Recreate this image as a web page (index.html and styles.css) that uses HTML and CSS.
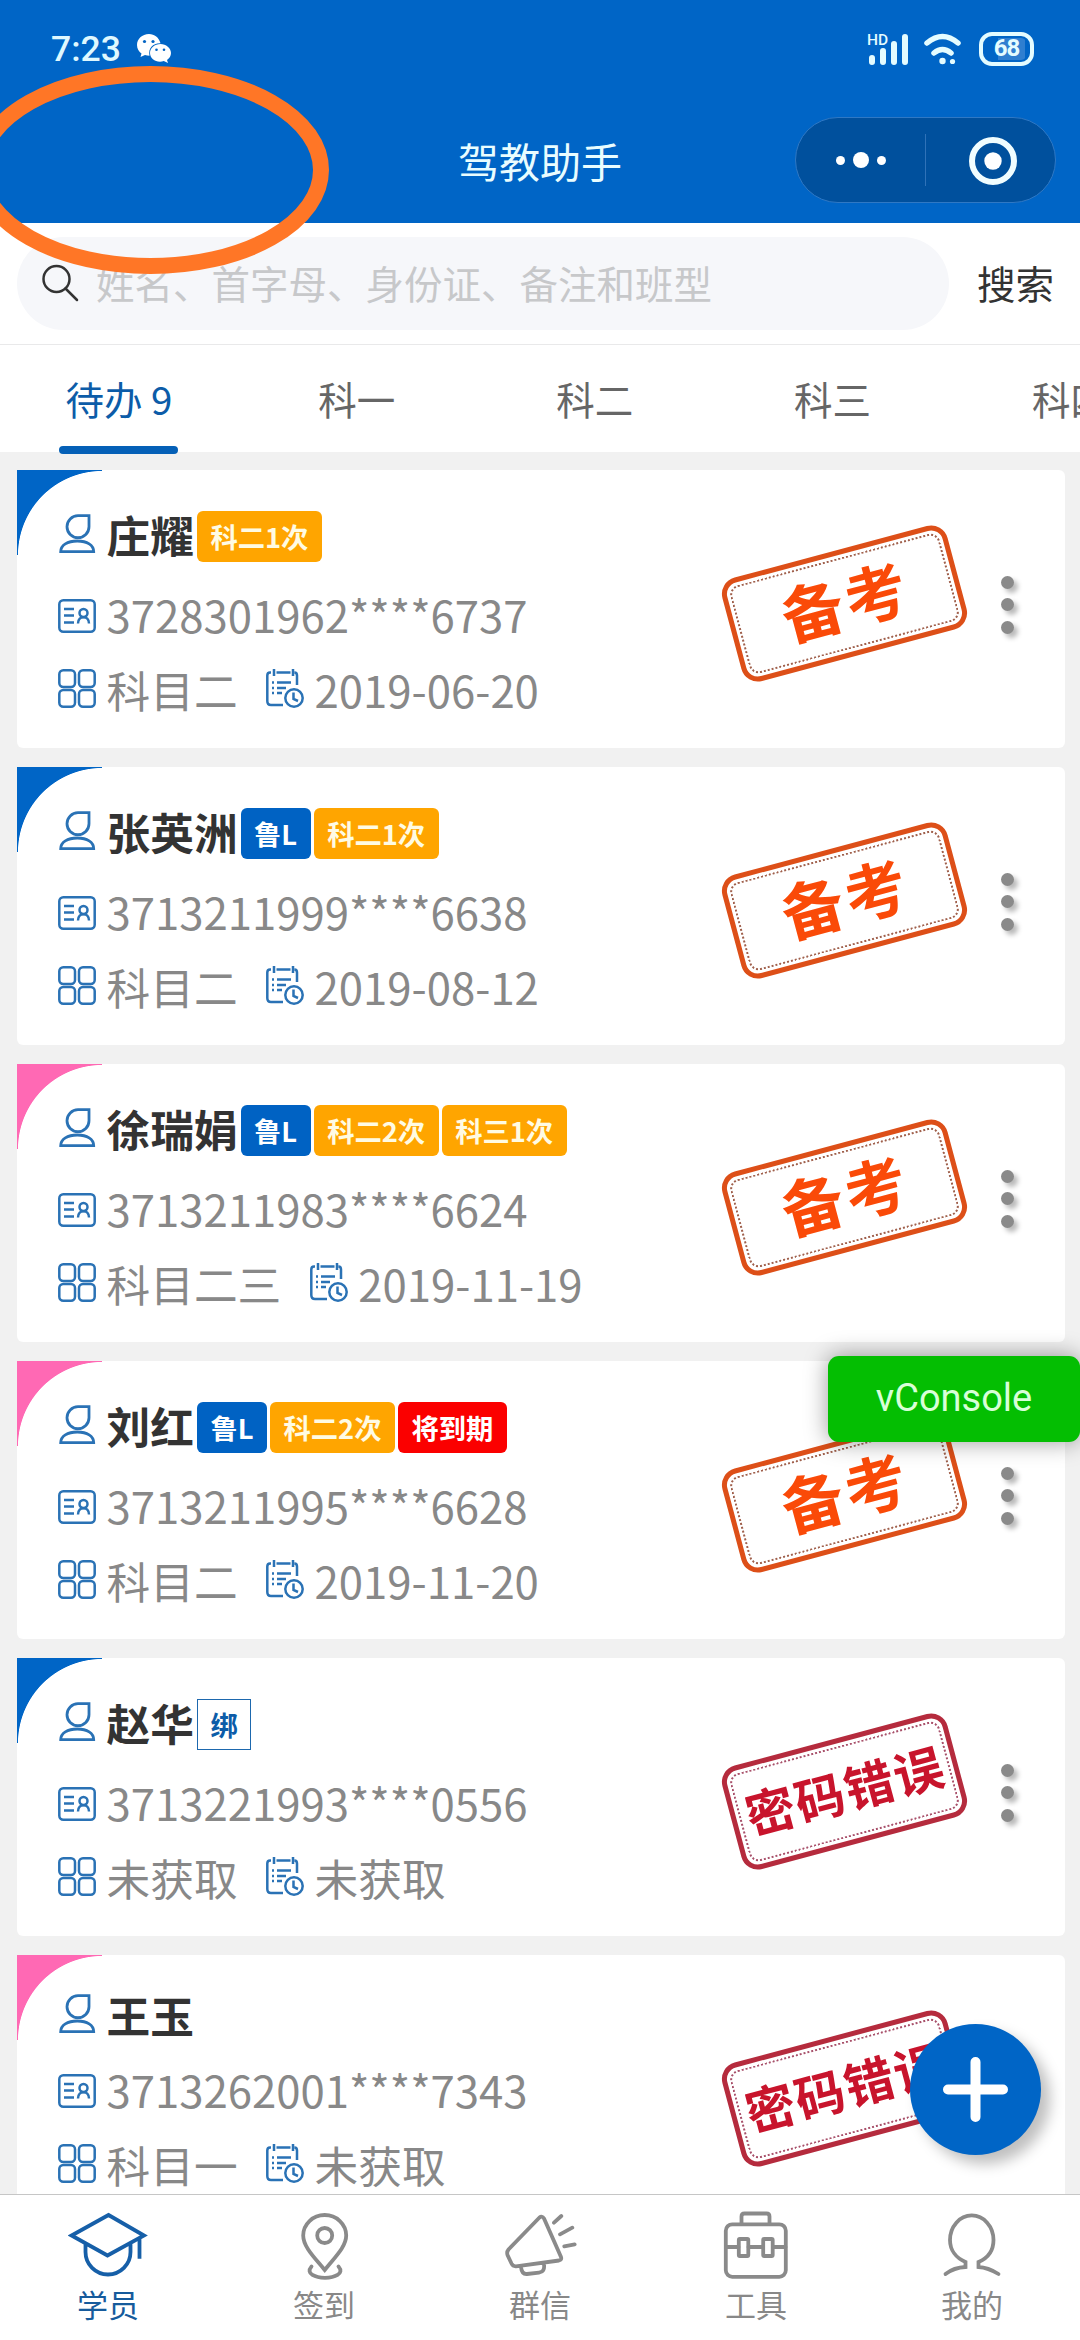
FILE: index.html
```html
<!DOCTYPE html>
<html lang="zh-CN">
<head>
<meta charset="utf-8">
<title>驾教助手</title>
<link rel="stylesheet" href="styles.css">
</head>
<body>
<svg class="sprite" aria-hidden="true">
  <symbol id="user" viewBox="0 0 38 40">
    <path d="M31 1.7H20A11 11 0 1 0 31 12.7Z"/>
    <path d="M2.7 37.7C2.7 31 9.500 27 19.300 27S35.700 31 35.700 37.700Z"/>
  </symbol>
  <symbol id="idcard" viewBox="0 0 38 34">
    <rect x="1.300" y="1.300" width="35.400" height="31.400" rx="4"/>
    <path d="M6 10h10M6 16.500h10M6 23.500h10"/>
    <circle cx="25.500" cy="14" r="4"/>
    <path d="M20 24.500C20 16 31 16 31 24.500"/>
  </symbol>
  <symbol id="grid" viewBox="0 0 38 39">
    <rect x="1.300" y="1.300" width="15.700" height="16.700" rx="4"/>
    <rect x="21" y="1.300" width="15.700" height="16.700" rx="4"/>
    <rect x="1.300" y="21" width="15.700" height="16.700" rx="4"/>
    <rect x="21" y="21" width="15.700" height="16.700" rx="4"/>
  </symbol>
  <symbol id="calendar" viewBox="0 0 38 39">
    <path d="M5 3.500H4Q1.300 3.500 1.300 6.500V32Q1.300 36 5 36H17M10.500 3.500H24.500M28.500 3.500Q31 3.500 31 6.500V16M8 0V7M27 0V7"/>
    <path d="M11 13.500H25M11 19H20M11 24H16M6 13.500h2M6 19h2M6 24h2"/>
    <circle cx="28" cy="29" r="8.700"/>
    <path d="M27.500 23.500V30L32 32"/>
  </symbol>
</svg>

<div class="app">
  <header class="header">
    <div class="status">
      <span class="time">7:23</span>
      <svg class="wechat" viewBox="0 0 34 29">
        <path fill="#fff" d="M12 0C5 0 0 5 0 11c0 4 2 6.500 4.500 8.500L3.500 23l4.500-2c1.500.5 3 .7 4.500.7C11 14 16 9 23.500 9.300 22 3.500 17.500 0 12 0Z"/>
        <path fill="#fff" d="M23.500 10C17.500 10 13 14 13 19s4.500 8.700 10 8.700c1.300 0 2.500-.2 3.800-.6L31 29l-1-3c2.500-1.700 4-4 4-7 0-5-5-9-10.500-9Z"/>
        <g fill="#0364c4"><circle cx="7.500" cy="7.500" r="1.600"/><circle cx="16" cy="7.500" r="1.600"/><circle cx="19.500" cy="15.700" r="1.300"/><circle cx="27" cy="15.700" r="1.300"/></g>
      </svg>
      <div class="signals">
        <svg class="signal" viewBox="0 0 42 34">
          <text x="0" y="12.500" class="hd">HD</text>
          <path d="M5 26V30M16 19V30M27 12V30M38 5V30" fill="none" stroke="#e4fcff" stroke-width="6" stroke-linecap="round"/>
        </svg>
        <svg class="wifi" viewBox="0 0 37 32">
          <path d="M3 10Q18.500-3 34 10M10 20Q18.500 13 27 20" fill="none" stroke="#e4fcff" stroke-width="5.500" stroke-linecap="round"/>
          <circle cx="18.500" cy="28" r="3.200" fill="#e4fcff"/><circle cx="28.500" cy="28.500" r="2.600" fill="#e4fcff"/>
        </svg>
        <div class="battery">68</div>
      </div>
    </div>
    <div class="titlebar">
      <h1 class="title">驾教助手</h1>
      <div class="capsule">
        <div class="capsule-half more"><i></i><i></i><i></i></div>
        <div class="capsule-half close">
          <svg viewBox="0 0 48 48"><circle cx="24" cy="24" r="21" fill="none" stroke="#f0fdff" stroke-width="6"/><circle cx="24" cy="24" r="8.700" fill="#fff"/></svg>
        </div>
      </div>
    </div>
  </header>

  <div class="search">
    <div class="search-box">
      <svg class="search-icon" viewBox="0 0 38 38"><circle cx="15.500" cy="15" r="13"/><path d="M24.500 24.500L36 36"/></svg>
      <span class="placeholder">姓名、首字母、身份证、备注和班型</span>
    </div>
    <span class="search-button">搜索</span>
  </div>

  <nav class="tabs">
    <span class="tab active">待办 9</span>
    <span class="tab">科一</span>
    <span class="tab">科二</span>
    <span class="tab">科三</span>
    <span class="tab">科四</span>
  </nav>

  <main class="list">
    <article class="card male">
      <div class="info">
        <div class="row name-row tagged"><svg class="icon user"><use href="#user"/></svg><b class="name">庄耀</b><span class="tag orange">科二1次</span></div>
        <div class="row"><svg class="icon idcard"><use href="#idcard"/></svg><span>3728301962****6737</span></div>
        <div class="row"><svg class="icon"><use href="#grid"/></svg><span>科目二</span><svg class="icon calendar"><use href="#calendar"/></svg><span>2019-06-20</span></div>
      </div>
      <div class="stamp ready"><span>备考</span></div>
      <div class="menu"><i></i><i></i><i></i></div>
    </article>

    <article class="card male">
      <div class="info">
        <div class="row name-row tagged"><svg class="icon user"><use href="#user"/></svg><b class="name">张英洲</b><span class="tag blue">鲁L</span><span class="tag orange">科二1次</span></div>
        <div class="row"><svg class="icon idcard"><use href="#idcard"/></svg><span>3713211999****6638</span></div>
        <div class="row"><svg class="icon"><use href="#grid"/></svg><span>科目二</span><svg class="icon calendar"><use href="#calendar"/></svg><span>2019-08-12</span></div>
      </div>
      <div class="stamp ready"><span>备考</span></div>
      <div class="menu"><i></i><i></i><i></i></div>
    </article>

    <article class="card female">
      <div class="info">
        <div class="row name-row tagged"><svg class="icon user"><use href="#user"/></svg><b class="name">徐瑞娟</b><span class="tag blue">鲁L</span><span class="tag orange">科二2次</span><span class="tag orange">科三1次</span></div>
        <div class="row"><svg class="icon idcard"><use href="#idcard"/></svg><span>3713211983****6624</span></div>
        <div class="row"><svg class="icon"><use href="#grid"/></svg><span>科目二三</span><svg class="icon calendar"><use href="#calendar"/></svg><span>2019-11-19</span></div>
      </div>
      <div class="stamp ready"><span>备考</span></div>
      <div class="menu"><i></i><i></i><i></i></div>
    </article>

    <article class="card female">
      <div class="info">
        <div class="row name-row tagged"><svg class="icon user"><use href="#user"/></svg><b class="name">刘红</b><span class="tag blue">鲁L</span><span class="tag orange">科二2次</span><span class="tag red">将到期</span></div>
        <div class="row"><svg class="icon idcard"><use href="#idcard"/></svg><span>3713211995****6628</span></div>
        <div class="row"><svg class="icon"><use href="#grid"/></svg><span>科目二</span><svg class="icon calendar"><use href="#calendar"/></svg><span>2019-11-20</span></div>
      </div>
      <div class="stamp ready"><span>备考</span></div>
      <div class="menu"><i></i><i></i><i></i></div>
    </article>

    <article class="card male">
      <div class="info">
        <div class="row name-row tagged"><svg class="icon user"><use href="#user"/></svg><b class="name">赵华</b><span class="tag outline">绑</span></div>
        <div class="row"><svg class="icon idcard"><use href="#idcard"/></svg><span>3713221993****0556</span></div>
        <div class="row"><svg class="icon"><use href="#grid"/></svg><span>未获取</span><svg class="icon calendar"><use href="#calendar"/></svg><span>未获取</span></div>
      </div>
      <div class="stamp error"><span>密码错误</span></div>
      <div class="menu"><i></i><i></i><i></i></div>
    </article>

    <article class="card female">
      <div class="info">
        <div class="row name-row"><svg class="icon user"><use href="#user"/></svg><b class="name">王玉</b></div>
        <div class="row"><svg class="icon idcard"><use href="#idcard"/></svg><span>3713262001****7343</span></div>
        <div class="row"><svg class="icon"><use href="#grid"/></svg><span>科目一</span><svg class="icon calendar"><use href="#calendar"/></svg><span>未获取</span></div>
      </div>
      <div class="stamp error"><span>密码错误</span></div>
      <div class="menu"><i></i><i></i><i></i></div>
    </article>
  </main>

  <footer class="tabbar">
    <div class="tabbar-item active">
      <svg viewBox="0 0 80 80"><path d="M40.500 10L76 30.500 39.500 50.500 3.600 30.500ZM17.500 39V47A22.500 22.500 0 0 0 62.500 47V38M71.500 33V53.700"/></svg>
      <span>学员</span>
    </div>
    <div class="tabbar-item">
      <svg viewBox="0 0 80 80"><path d="M40.700 65C31 53 19.200 42 19.200 30.500A21.500 20.500 0 0 1 62.200 30.500C62.200 42 50 53 40.700 65ZM27.500 61.500C21 69 32 72.800 41 72.800S61 69 54.500 61.500"/><circle cx="40.700" cy="30.500" r="7.500"/></svg>
      <span>签到</span>
    </div>
    <div class="tabbar-item">
      <svg viewBox="0 0 80 80"><path d="M39.500 12.500L8.500 44.500Q6.500 47 7.500 50L11.500 58.500Q13 61.500 16 61.300L59 55.500Q62 55 61 52L44 13.500Q42 10.500 39.500 12.500ZM21 62C21.500 67 23.500 69.300 27 69L39 67.700Q45 67 44 59.500M54 17.700L61.300 11M60 29.300L72.300 22.700M64.300 41.300L74.700 39.300"/></svg>
      <span>群信</span>
    </div>
    <div class="tabbar-item">
      <svg viewBox="0 0 80 80"><rect x="9.800" y="19.300" width="60" height="52.500" rx="6.500"/><path d="M25.500 19V11.500Q25.500 8.500 28.500 8.500H50.500Q53.500 8.500 53.500 11.500V19M10 42H22.500M32.500 42H47M57 42H69.500"/><rect x="22.800" y="34" width="9.500" height="17" rx="1"/><rect x="47.200" y="34" width="9.500" height="17" rx="1"/></svg>
      <span>工具</span>
    </div>
    <div class="tabbar-item">
      <svg viewBox="0 0 80 80"><path d="M13.500 69Q22 62.500 33.500 62V57C24 53 18 45 18 35A21.700 24.500 0 0 1 61.500 35C61.500 45 56 53 46.500 57V62Q56 62.500 66.500 69"/></svg>
      <span>我的</span>
    </div>
  </footer>

  <svg class="highlight" viewBox="0 0 330 210"><ellipse cx="150.500" cy="105" rx="170.500" ry="96"/></svg>
  <div class="vconsole">vConsole</div>
  <div class="add"><svg viewBox="0 0 131 131"><path d="M65.500 38V93M38 65.500H93"/></svg></div>
</div>
</body>
</html>
```

FILE: styles.css
```css
* { box-sizing: border-box; }

body {
  margin: 0;
  font-family: "Noto Sans CJK SC", sans-serif;
  color: #333;
}

.sprite { display: none; }

.app {
  position: relative;
  display: flex;
  flex-direction: column;
  width: 1080px;
  height: 2340px;
  overflow: hidden;
  background: #f1f1f1;
}

/* header */
.header {
  flex: none;
  height: 223px;
  background: #0065c6;
  color: #e9fdff;
}

.status {
  display: flex;
  align-items: center;
  height: 97px;
  padding: 0 46px 0 51px;
}

.time {
  width: 86px;
  font: 500 35.5px/40px Roboto, sans-serif;
  color: #dff8ff;
}

.wechat { width: 34px; height: 29px; }

.signals {
  display: flex;
  align-items: center;
  margin-left: auto;
}

.signal { width: 42px; height: 34px; margin-right: 15px; }
.hd { font: 500 15.5px Roboto, sans-serif; fill: #e4fcff; }
.wifi { width: 37px; height: 32px; margin-right: 18px; }

.battery {
  width: 55px;
  height: 34px;
  border: 4.5px solid #e4fcff;
  border-radius: 13px;
  background: linear-gradient(90deg, transparent 30%, #2f7fd0 30%, #2f7fd0 94%, transparent 94%) content-box;
  padding: 2px 3px;
  font: 700 24px/21px Roboto, sans-serif;
  letter-spacing: -1px;
  text-align: center;
  color: #e4fcff;
}

.titlebar {
  display: grid;
  grid-template-columns: 1fr auto 1fr;
  align-items: center;
  height: 126px;
  padding: 0 24px 0 24px;
}

.title {
  grid-column: 2;
  margin: 0;
  font-size: 41px;
  font-weight: 400;
  line-height: 60px;
}

.capsule {
  justify-self: end;
  display: flex;
  align-items: center;
  width: 261px;
  height: 86px;
  border: 1.5px solid #2f78c4;
  border-radius: 43px;
  background: #00509d;
}

.capsule-half {
  flex: 1;
  display: flex;
  align-items: center;
  justify-content: center;
  height: 52px;
}

.more { gap: 8px; border-right: 1.500px solid #2f72b8; }
.more i { width: 9px; height: 9px; border-radius: 50%; background: #fff; }
.more i:nth-child(2) { width: 16px; height: 16px; }
.close svg { width: 48px; height: 48px; margin: 2px 0 0 5px; }

/* search */
.search {
  flex: none;
  display: flex;
  align-items: center;
  height: 122px;
  padding: 0 26px 0 17px;
  border-bottom: 1.500px solid #e9e9ea;
  background: #fff;
  font-size: 38.500px;
}

.search-box {
  display: flex;
  align-items: center;
  width: 932px;
  height: 93px;
  padding-left: 25px;
  border-radius: 46.500px;
  background: #f6f7fa;
  color: #c7c8ca;
}

.placeholder, .search-button { padding-bottom: 3px; }

.search-icon {
  width: 38px;
  height: 38px;
  margin: -2px 17px 0 -1px;
  fill: none;
  stroke: #333;
  stroke-width: 2.500;
  stroke-linecap: round;
}

.search-button { margin-left: auto; }

/* category tabs */
.tabs {
  flex: none;
  display: flex;
  height: 107px;
  background: #fff;
}

.tab {
  flex: 0 0 237.9px;
  height: 109px;
  line-height: 107px;
  font-size: 38.5px;
  text-align: center;
  color: #666;
}

.tab.active { position: relative; color: #0c5ca8; }
.tab.active::after {
  content: "";
  position: absolute;
  left: 59px;
  bottom: 0;
  width: 119px;
  height: 8px;
  border-radius: 4px;
  background: #0560b7;
}

/* student cards */
.list {
  flex: 1;
  min-height: 0;
  overflow: hidden;
  padding: 18px 15px 0 17px;
}

.card {
  display: flex;
  height: 278px;
  margin-bottom: 19px;
  border-radius: 0 6px 6px 6px;
  background-color: #fff;
  background-repeat: no-repeat;
  background-size: 85px 85px;
}

.male { background-image: radial-gradient(circle at 100% 100%, transparent 83.600px, #0065c6 84.400px); }
.female { background-image: radial-gradient(circle at 100% 100%, transparent 83.600px, #ff69b4 84.400px); }

.info {
  width: 711px;
  padding: 34px 0 0 41px;
  font-size: 43.700px;
  color: #888;
}

.row {
  display: flex;
  align-items: center;
  height: 60px;
  white-space: nowrap;
}

.row + .row { margin-top: 20px; }
.row:last-child { margin-top: 14.500px; }
.name-row { height: 50px; }
.tagged { height: 60px; }

.icon {
  flex: none;
  width: 38px;
  height: 39px;
  margin-right: 10.500px;
  fill: none;
  stroke: #2a72b5;
  stroke-width: 2.500;
  stroke-linecap: butt;
}

.icon.user { height: 40px; stroke-width: 2.800; }
.icon.idcard { height: 34px; margin-top: 4px; }
.icon.calendar { margin-left: 28.500px; }

.name { font-weight: 700; color: #333; margin-right: 3px; }

.tag {
  height: 51px;
  margin: 5px 3px 0 0;
  padding: 0 13.500px;
  border-radius: 6px;
  font-size: 27.300px;
  font-weight: 700;
  line-height: 51px;
  color: #fff;
}

.orange { background: #ffa500; color: #fffbe3; }
.blue { background: #0062c3; }
.red { background: #fb0000; }
.outline { padding: 0 12.500px; border: 1.500px solid #1d68ae; border-radius: 0; line-height: 49px; color: #0c5ca8; }

.stamp {
  flex: none;
  width: 233px;
  height: 107px;
  margin-top: 79.500px;
  padding: 3px;
  border: 5px solid;
  border-radius: 17px;
  transform: rotate(-15deg);
  font-weight: 700;
  text-align: center;
  white-space: nowrap;
}

.stamp span {
  display: block;
  height: 91px;
  border: 2px dotted #a0604c;
  border-radius: 10px;
}

.ready { border-color: #dd4f18; color: #fa4a08; font-size: 62px; }
.ready span { line-height: 79px; letter-spacing: 3px; padding-left: 3px; }
.error { border-color: #b52b3d; color: #c8142c; font-size: 49.500px; }
.error span { line-height: 81px; letter-spacing: 1.500px; padding-left: 1.500px; border-color: #a8506a; }

.menu {
  display: flex;
  flex-direction: column;
  gap: 9.500px;
  margin: 105.500px 0 0 23px;
  width: 46px;
  align-items: center;
}

.menu i {
  width: 13px;
  height: 13px;
  border-radius: 50%;
  background: #8a8a8a;
  box-shadow: 4px 4px 5px rgba(0, 0, 0, .28);
}

/* bottom bar */
.tabbar {
  flex: none;
  display: flex;
  height: 146px;
  border-top: 1.500px solid #c6c6c6;
  background: #fff;
}

.tabbar-item {
  flex: 1;
  display: flex;
  flex-direction: column;
  align-items: center;
  padding-top: 10px;
  font-size: 31px;
  line-height: 38px;
  color: #888;
}

.tabbar-item svg {
  width: 80px;
  height: 80px;
  fill: none;
  stroke: #8a8a8a;
  stroke-width: 3.800;
  stroke-linecap: round;
}

.tabbar-item.active { color: #165b9c; }
.tabbar-item.active svg { stroke: #165fa8; stroke-linecap: butt; }

/* overlays */
.highlight {
  position: absolute;
  left: 0;
  top: 65px;
  width: 330px;
  height: 210px;
  fill: none;
  stroke: #ff7626;
  stroke-width: 16;
}

.vconsole {
  position: absolute;
  right: 0;
  top: 1356px;
  width: 252px;
  height: 86px;
  border-radius: 11px;
  background: #04be02;
  box-shadow: 0 0 23px rgba(0, 0, 0, .4);
  font: 400 38px/84px Roboto, sans-serif;
  text-align: center;
  color: #d8ffd8;
}

.add {
  position: absolute;
  left: 910px;
  top: 2024px;
  width: 131px;
  height: 131px;
  border-radius: 50%;
  background: #0065c6;
  box-shadow: 9px 9px 14px rgba(0, 0, 0, .25);
}

.add svg {
  display: block;
  fill: none;
  stroke: #fff;
  stroke-width: 10;
  stroke-linecap: round;
}
```
